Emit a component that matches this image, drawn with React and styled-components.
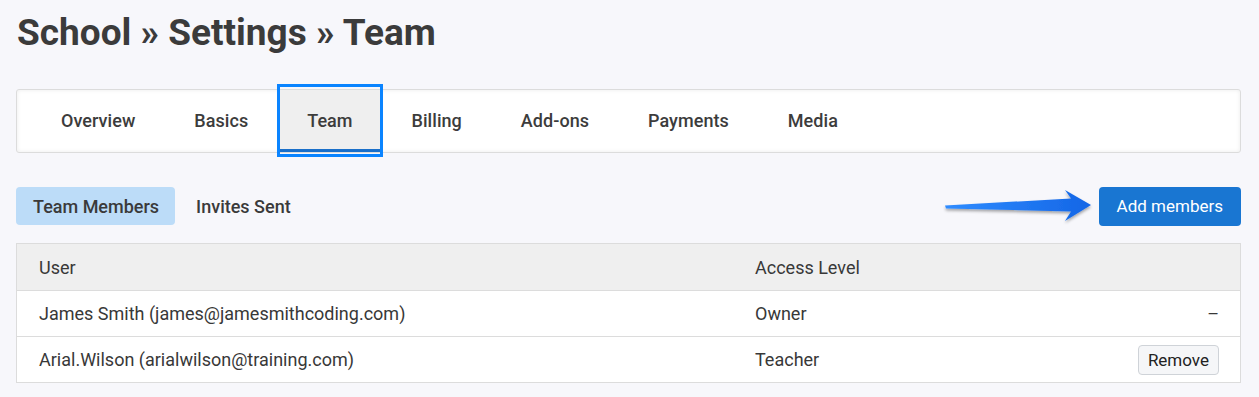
import React from 'react';
import styled, { createGlobalStyle } from 'styled-components';

const GlobalStyle = createGlobalStyle`
  body {
    margin: 0;
    background: #f7f7fb;
    font-family: Roboto, "Liberation Sans", sans-serif;
    color: #3b3b3b;
  }
`;

const Page = styled.div`
  padding: 12px 18px 0 16px;
`;

const Title = styled.h1`
  font-size: 37px;
  font-weight: 700;
  line-height: 42px;
  margin: 0 0 35px 1px;
  color: #3b3b3b;
`;

const TabBar = styled.nav`
  display: flex;
  gap: 5px;
  height: 64px;
  box-sizing: border-box;
  padding: 0 17px;
  background: #fff;
  border: 1px solid #dcdcdc;
  border-radius: 3px;
  box-shadow: inset 0 0 4px rgba(0, 0, 0, 0.08);
`;

const Tab = styled.a`
  position: relative;
  display: flex;
  align-items: center;
  padding: 1px 27px 0;
  font-size: 18px;
  font-weight: 500;
  letter-spacing: 0.05px;
  color: #3c3c3c;
  background: ${({ $active }) => ($active ? '#efefef' : 'transparent')};
  border-bottom: 3px solid ${({ $active }) => ($active ? '#1a6fc9' : 'transparent')};

  ${({ $active }) =>
    $active &&
    `
    &::after {
      content: '';
      position: absolute;
      top: -6px;
      bottom: -8px;
      left: -3px;
      right: -3px;
      border: 3px solid #0a84ff;
    }
  `}
`;

const SubRow = styled.div`
  display: flex;
  align-items: center;
  margin: 33px 0 17px;
`;

const SubTab = styled.button`
  border: none;
  border-radius: 4px;
  height: 38px;
  padding: 0 16px 0 17px;
  margin-right: 4px;
  font-family: inherit;
  font-size: 18px;
  font-weight: 500;
  color: #3a3a3a;
  background: ${({ $active }) => ($active ? '#bcdcf8' : 'transparent')};
`;

const Spacer = styled.div`
  flex: 1;
`;

const Arrow = styled.svg`
  display: block;
  margin-right: 4px;
`;

const PrimaryButton = styled.button`
  height: 39px;
  padding: 0 18px;
  border: none;
  border-radius: 4px;
  background: #1976d2;
  color: #fff;
  font-family: inherit;
  font-size: 17px;
`;

const Table = styled.div`
  background: #fff;
  border: 1px solid #dcdcdc;
`;

const Row = styled.div`
  display: grid;
  grid-template-columns: 716px 1fr auto;
  align-items: center;
  height: ${({ $head }) => ($head ? '46px' : '45px')};
  padding: 0 21px 0 22px;
  background: ${({ $head }) => ($head ? '#efefef' : '#fff')};
  font-size: 18px;
  color: #383838;
  & + & {
    border-top: 1px solid #dcdcdc;
  }
`;

const SmallButton = styled.button`
  height: 30px;
  padding: 0 9px;
  border: 1px solid #cfd3d8;
  border-radius: 4px;
  background: #f5f6f8;
  font-family: inherit;
  font-size: 17px;
  color: #222;
`;

const tabs = ['Overview', 'Basics', 'Team', 'Billing', 'Add-ons', 'Payments', 'Media'];

const members = [
  { user: 'James Smith (james@jamesmithcoding.com)', level: 'Owner', action: '–' },
  { user: 'Arial.Wilson (arialwilson@training.com)', level: 'Teacher', action: 'remove' },
];

export default function App() {
  return (
    <Page>
      <GlobalStyle />
      <Title>School » Settings » Team</Title>
      <TabBar>
        {tabs.map((t) => (
          <Tab key={t} $active={t === 'Team'}>
            {t}
          </Tab>
        ))}
      </TabBar>
      <SubRow>
        <SubTab $active>Team Members</SubTab>
        <SubTab>Invites Sent</SubTab>
        <Spacer />
        <Arrow width="152" height="40" viewBox="945 188 152 40">
          <defs>
            <linearGradient id="ag" x1="0" y1="0" x2="1" y2="0">
              <stop offset="0" stopColor="#2f8cff" />
              <stop offset="1" stopColor="#1466e6" />
            </linearGradient>
            <filter id="sh" x="-10%" y="-40%" width="120%" height="180%">
              <feDropShadow dx="0" dy="2" stdDeviation="1.5" floodColor="#000" floodOpacity="0.35" />
            </filter>
          </defs>
          <path
            d="M947 207.5 L1073 200.5 L1067 192 L1093 207 L1067 223 L1073 213.5 L948 210.5 Z"
            fill="url(#ag)"
            filter="url(#sh)"
          />
        </Arrow>
        <PrimaryButton>Add members</PrimaryButton>
      </SubRow>
      <Table>
        <Row $head>
          <span>User</span>
          <span>Access Level</span>
          <span />
        </Row>
        {members.map((m) => (
          <Row key={m.user}>
            <span>{m.user}</span>
            <span>{m.level}</span>
            {m.action === 'remove' ? <SmallButton>Remove</SmallButton> : <span>{m.action}</span>}
          </Row>
        ))}
      </Table>
    </Page>
  );
}
